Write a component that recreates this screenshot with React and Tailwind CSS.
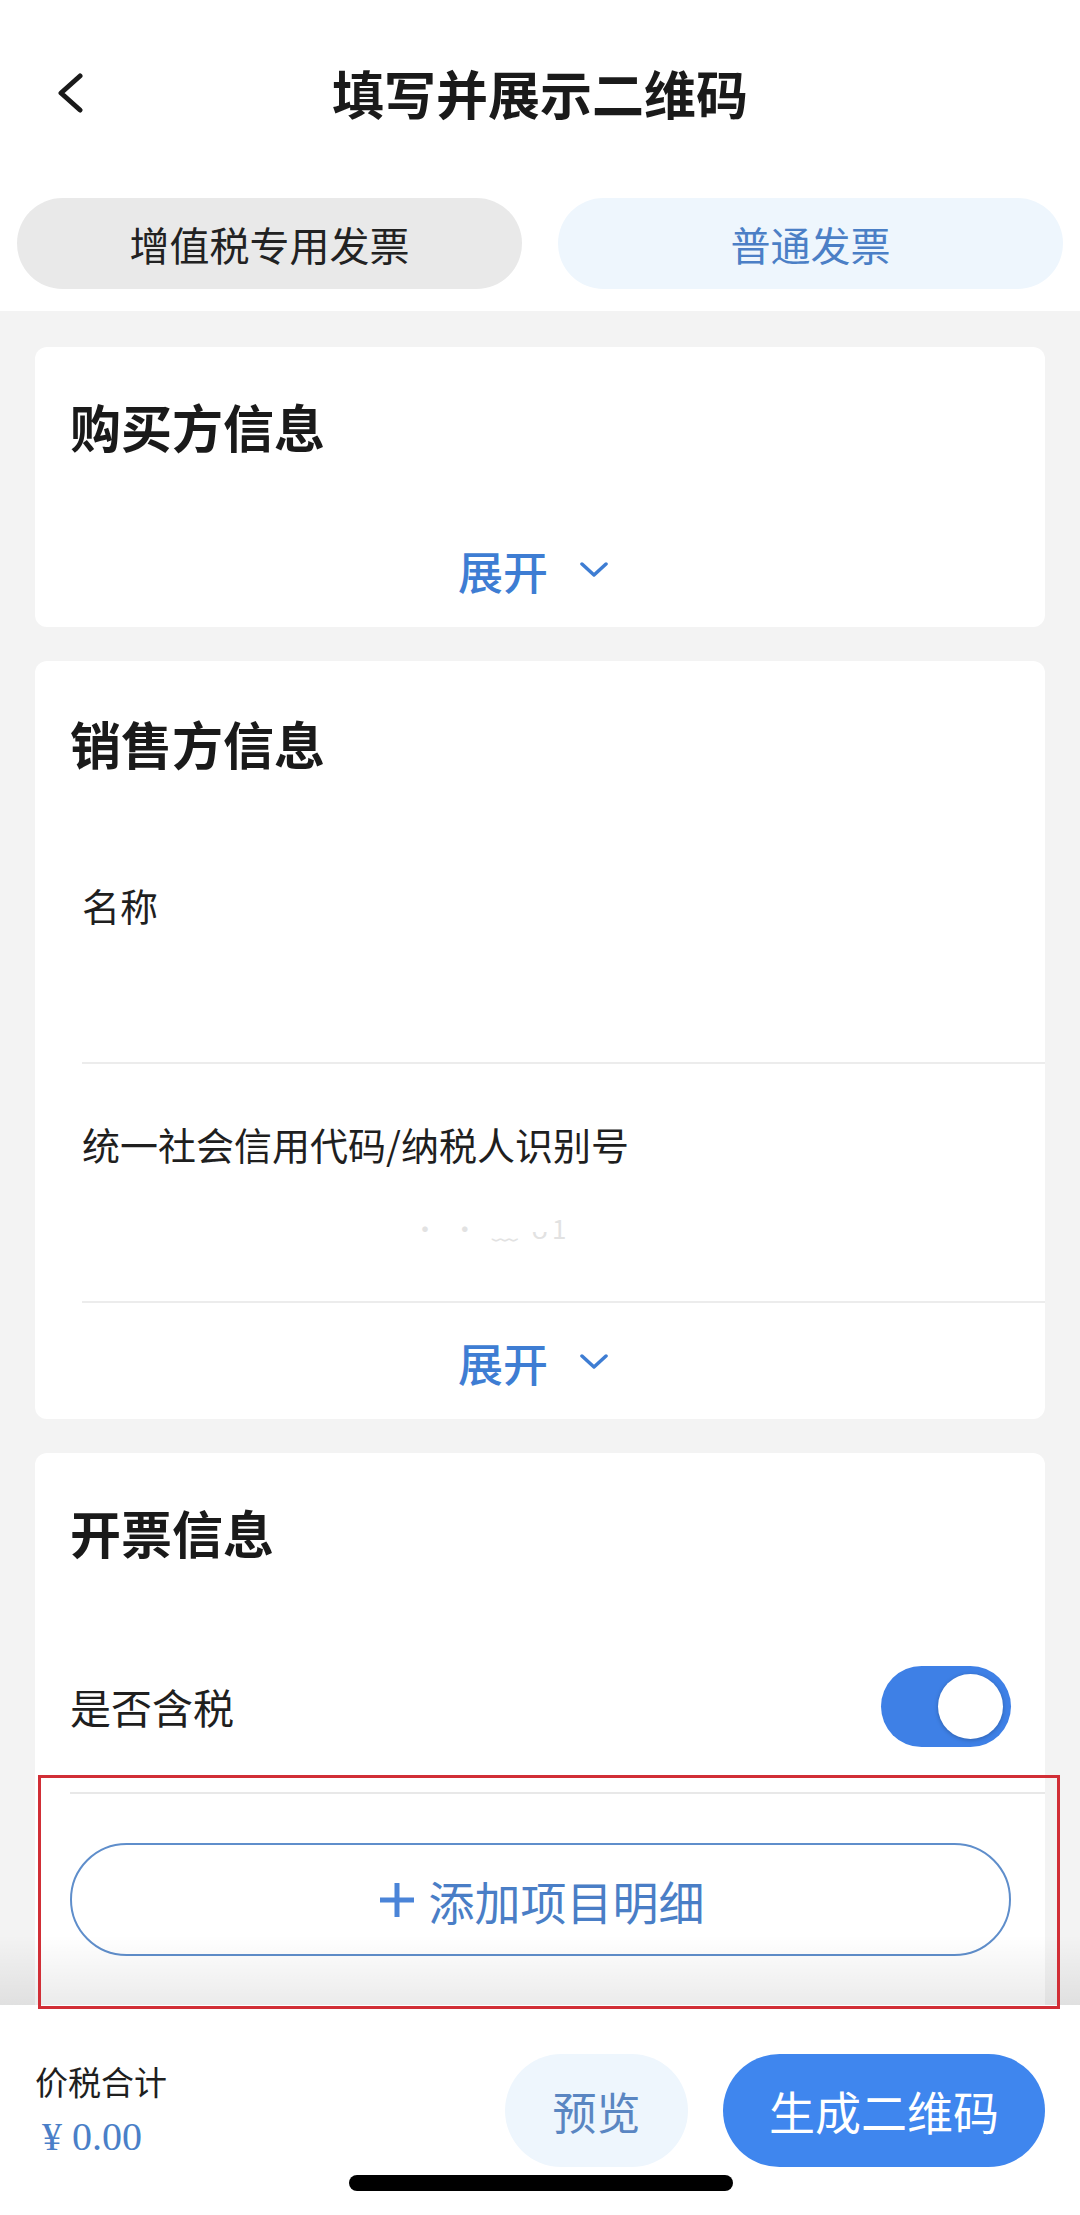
import React from 'react'

const Chevron = () => (
  <svg width="28" height="16" viewBox="0 0 28 16" fill="none">
    <path d="M2 2 L14 13 L26 2" stroke="#3e7dd3" strokeWidth="3.5" strokeLinecap="round" strokeLinejoin="round" />
  </svg>
)

const ExpandRow = () => (
  <div className="flex items-center justify-center gap-[32px] h-[60px] pr-[14px]">
    <span className="text-[45px] leading-none font-medium text-[#3e7dd3]">展开</span>
    <Chevron />
  </div>
)

const Field = ({ label, value, first }) => (
  <div className={`ml-[47px] border-b-2 border-[#ececec] pt-[54px] pb-[49px] ${first ? 'mt-[52px]' : ''}`}>
    <div className="h-[50px] flex items-center text-[38px] text-[#1f1f1f]">{label}</div>
    <div className="mt-[34px] h-[50px] flex items-center pl-[330px] text-[26px] text-[#e2e2e2] tracking-[4px]">
      {value}
    </div>
  </div>
)

export default function App() {
  return (
    <div className="relative w-[1080px] h-[2215px] overflow-hidden bg-white font-['Noto_Sans_CJK_SC','Noto_Sans',sans-serif] text-[#1a1a1a]">
      {/* header */}
      <div className="grid grid-cols-[1fr_auto_1fr] items-center h-[186px]">
        <div className="pl-[56px]">
          <svg width="30" height="40" viewBox="0 0 30 40" fill="none">
            <path d="M24 3 L5 20 L24 37" stroke="#1a1a1a" strokeWidth="5" strokeLinecap="round" strokeLinejoin="round" />
          </svg>
        </div>
        <h1 className="text-[52px] font-bold leading-none">填写并展示二维码</h1>
        <div />
      </div>

      {/* tabs */}
      <div className="flex gap-[36px] px-[17px] pt-[12px] pb-[22px]">
        <div className="flex-1 h-[91px] rounded-full bg-[#e9e9e9] flex items-center justify-center text-[40px] text-[#222]">
          增值税专用发票
        </div>
        <div className="flex-1 h-[91px] rounded-full bg-[#eef6fd] flex items-center justify-center text-[40px] text-[#4b7fc6]">
          普通发票
        </div>
      </div>

      {/* scroll area */}
      <div className="relative h-[1694px] overflow-hidden bg-[#f3f3f3] px-[35px] pt-[36px]">
        <div className="flex flex-col gap-[34px]">
          {/* buyer */}
          <div className="bg-white rounded-[12px] pt-[49px] pb-[27px]">
            <div className="pl-[35px] h-[60px] flex items-center text-[51px] font-bold leading-none">购买方信息</div>
            <div className="mt-[84px]">
              <ExpandRow />
            </div>
          </div>

          {/* seller */}
          <div className="bg-white rounded-[12px] pt-[52px] pb-[27px]">
            <div className="pl-[35px] h-[60px] flex items-center text-[51px] font-bold leading-none">销售方信息</div>
            <Field first label="名称" value="" />
            <Field label="统一社会信用代码/纳税人识别号" value="· · ﹏ ᴗ1" />
            <div className="mt-[29px]">
              <ExpandRow />
            </div>
          </div>

          {/* invoice info */}
          <div className="bg-white rounded-[12px] pt-[49px] pb-[120px]">
            <div className="pl-[35px] h-[60px] flex items-center text-[51px] font-bold leading-none">开票信息</div>
            <div className="mt-[104px] h-[81px] pl-[35px] pr-[34px] flex items-center justify-between">
              <span className="text-[41px] text-[#1f1f1f]">是否含税</span>
              <div className="w-[130px] h-[81px] rounded-full bg-[#3e80e6] flex items-center justify-end pr-[8px]">
                <div className="w-[65px] h-[65px] rounded-full bg-white shadow-[0_1px_4px_rgba(0,0,0,0.25)]" />
              </div>
            </div>
            <div className="ml-[35px] mt-[45px] border-t-2 border-[#e8e8e8]" />
            <div className="ml-[35px] mr-[34px] mt-[49px] h-[113px] rounded-full border-2 border-[#5f8ecb] flex items-center justify-center gap-[12px] text-[#4a7ec6]">
              <svg width="40" height="40" viewBox="0 0 40 40" fill="none">
                <path d="M20 3 V37 M3 20 H37" stroke="#4a84d8" strokeWidth="5" />
              </svg>
              <span className="text-[46px] leading-none">添加项目明细</span>
            </div>
          </div>
        </div>

        {/* bottom fade */}
        <div className="absolute left-0 right-0 bottom-0 h-[70px] bg-gradient-to-b from-transparent to-[rgba(0,0,0,0.08)] pointer-events-none" />
      </div>

      {/* bottom bar */}
      <div className="h-[210px] px-[35px] flex items-start justify-between bg-white">
        <div className="pt-[54px]">
          <div className="text-[33px] leading-[44px] text-[#1f1f1f]">价税合计</div>
          <div className="mt-[10px] pl-[7px] leading-[48px] text-[40px] text-[#4a7fc8] font-['Liberation_Serif',serif]">¥ 0.00</div>
        </div>
        <div className="pt-[49px] flex gap-[35px]">
          <div className="w-[183px] h-[113px] rounded-full bg-[#eef6fd] flex items-center justify-center text-[44px] text-[#5a86c2]">
            预览
          </div>
          <div className="w-[322px] h-[113px] rounded-full bg-[#3f86ee] flex items-center justify-center text-[46px] text-white">
            生成二维码
          </div>
        </div>
      </div>

      {/* annotation box */}
      <div className="absolute left-[38px] top-[1775px] w-[1022px] h-[234px] border-[3px] border-[#d12e36] pointer-events-none" />

      {/* home indicator */}
      <div className="absolute left-[349px] top-[2175px] w-[384px] h-[16px] rounded-full bg-black" />
    </div>
  )
}
